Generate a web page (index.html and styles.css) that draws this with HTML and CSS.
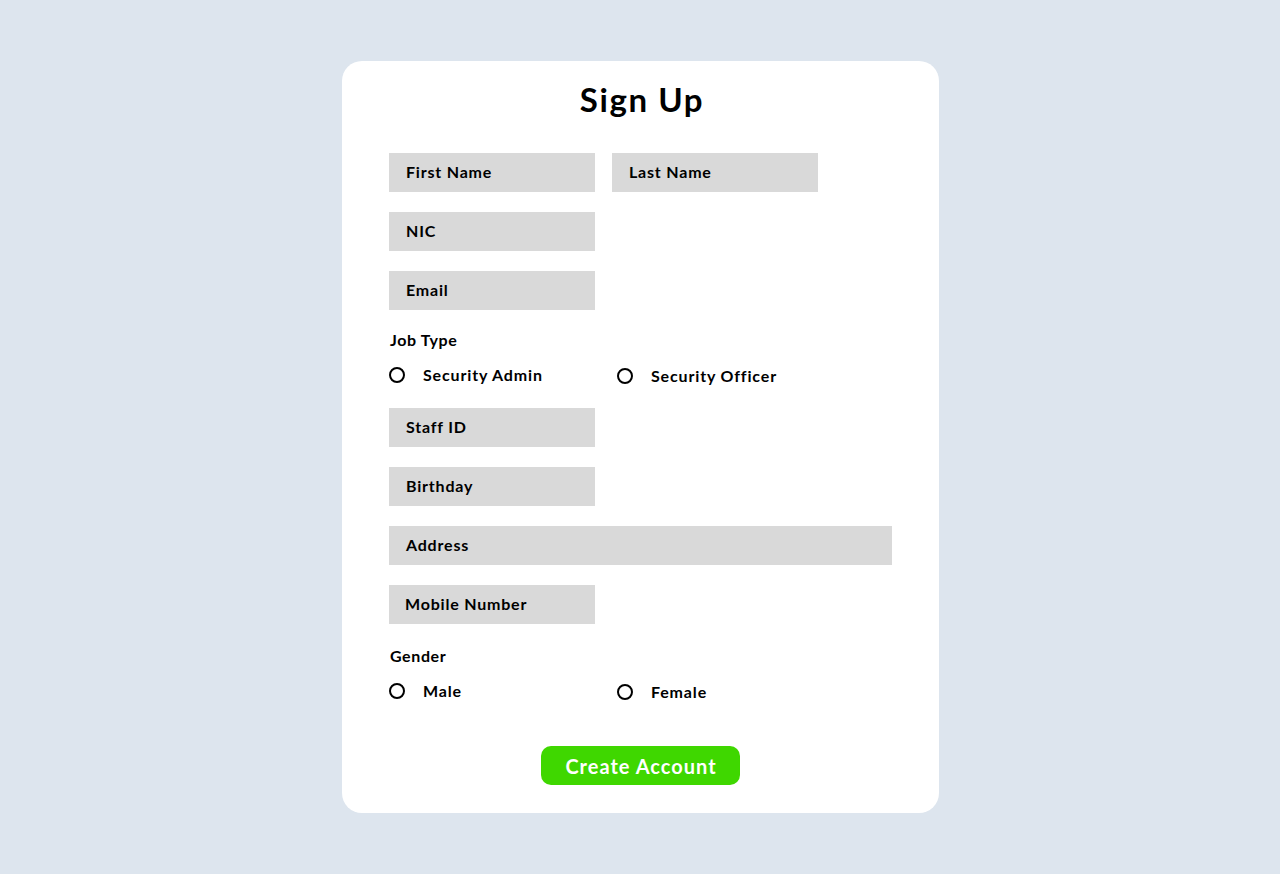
FILE: index.html
```html
<!DOCTYPE html>
<html lang="en">
<head>
<meta charset="utf-8">
<title>Sign Up</title>
<link rel="stylesheet" href="styles.css">
</head>
<body>
<div class="page">
  <form class="card">
    <h1 class="title">Sign Up</h1>
    <div class="row">
      <div class="field">First Name</div>
      <div class="field">Last Name</div>
    </div>
    <div class="row gap"><div class="field">NIC</div></div>
    <div class="row gap"><div class="field">Email</div></div>
    <div class="label label-job">Job Type</div>
    <div class="radios">
      <div class="radio"><span class="dot"></span><span class="rtext">Security Admin</span></div>
      <div class="radio lower"><span class="dot"></span><span class="rtext">Security Officer</span></div>
    </div>
    <div class="row gap-after-radio"><div class="field">Staff ID</div></div>
    <div class="row gap"><div class="field">Birthday</div></div>
    <div class="row gap"><div class="field wide">Address</div></div>
    <div class="row gap"><div class="field mobile">Mobile Number</div></div>
    <div class="label label-gender">Gender</div>
    <div class="radios">
      <div class="radio"><span class="dot"></span><span class="rtext">Male</span></div>
      <div class="radio lower"><span class="dot"></span><span class="rtext">Female</span></div>
    </div>
    <div class="actions"><button type="button" class="btn">Create Account</button></div>
  </form>
</div>
</body>
</html>
```
FILE: styles.css
```css
* { box-sizing: border-box; }
html, body { margin: 0; padding: 0; }
body {
  background: #dde5ee;
  font-family: Lato, "Liberation Sans", sans-serif;
  color: #000;
}
.page {
  width: 1280px;
  height: 874px;
  padding-top: 61px;
  display: flex;
  justify-content: center;
  padding-left: 1px;
}
.card {
  width: 597px;
  height: 752px;
  background: #fff;
  border-radius: 20px;
  padding: 18px 47px 0 47px;
  display: flex;
  flex-direction: column;
}
.title {
  margin: 0;
  text-align: center;
  font-size: 33px;
  line-height: 40px;
  font-weight: 700;
  letter-spacing: 1.6px;
  padding-left: 3px;
}
.row {
  display: flex;
  gap: 17px;
  margin-top: 34px;
}
.row.gap { margin-top: 20px; }
.row.gap-after-radio { margin-top: 23px; }
.field {
  width: 206px;
  height: 39px;
  background: #d9d9d9;
  padding-left: 17px;
  font-size: 16px;
  font-weight: 700;
  letter-spacing: 0.8px;
  line-height: 37px;
}
.field.wide { width: 503px; }
.field.mobile { padding-left: 16px; }
.label {
  font-size: 16px;
  font-weight: 700;
  letter-spacing: 0.6px;
  line-height: 20px;
  padding-left: 1px;
}
.label-job { margin-top: 20px; }
.label-gender { margin-top: 22px; }
.radios {
  display: flex;
  margin-top: 15px;
  height: 20px;
}
.radio {
  width: 228px;
  display: flex;
  align-items: center;
  gap: 18px;
}
.radio.lower { padding-top: 2px; }
.dot {
  width: 16px;
  height: 16px;
  border: 2px solid #000;
  border-radius: 50%;
  flex: none;
}
.rtext {
  font-size: 16px;
  font-weight: 700;
  letter-spacing: 0.85px;
  padding-bottom: 2px;
}
.actions {
  display: flex;
  justify-content: center;
  margin-top: 45px;
}
.btn {
  width: 199px;
  height: 39px;
  border: none;
  border-radius: 10px;
  background: #3fd700;
  color: #fff;
  font-family: Lato, "Liberation Sans", sans-serif;
  font-size: 20px;
  font-weight: 700;
  letter-spacing: 1px;
  padding: 0 0 0 2px;
  margin-right: 1px;
}
```
